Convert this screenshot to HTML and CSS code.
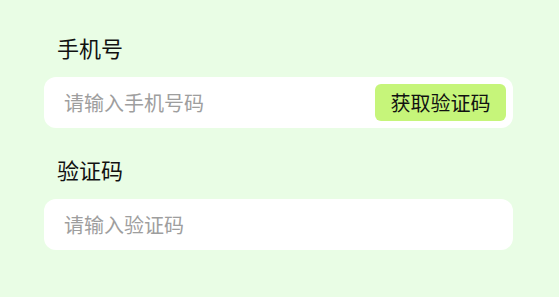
FILE: index.html
```html
<!DOCTYPE html>
<html lang="zh-CN">
<head>
<meta charset="utf-8">
<link rel="stylesheet" href="styles.css">
</head>
<body>
<div class="form">
  <div class="field">
    <div class="label">手机号</div>
    <div class="input-box">
      <input class="input" type="text" placeholder="请输入手机号码">
      <button class="code-btn" type="button">获取验证码</button>
    </div>
  </div>
  <div class="field">
    <div class="label">验证码</div>
    <div class="input-box">
      <input class="input" type="text" placeholder="请输入验证码">
    </div>
  </div>
</div>
</body>
</html>
```
FILE: styles.css
```css
html, body {
  margin: 0;
  padding: 0;
  background: #e9fde5;
  font-family: "Noto Sans CJK SC", "Noto Sans", sans-serif;
}
.form {
  padding: 32px 46px 0 44px;
  display: flex;
  flex-direction: column;
  gap: 26px;
}
.field {
  display: flex;
  flex-direction: column;
}
.label {
  height: 30px;
  line-height: 30px;
  font-size: 22px;
  color: #111;
  padding-left: 13px;
  margin-bottom: 15px;
}
.input-box {
  height: 51px;
  background: #fff;
  border-radius: 12px;
  display: flex;
  align-items: center;
  padding: 0 7px 0 20px;
  box-sizing: border-box;
}
.input {
  flex: 1;
  min-width: 0;
  border: none;
  outline: none;
  background: transparent;
  font-family: inherit;
  font-size: 20px;
  color: #333;
  padding: 0;
}
.input::placeholder {
  color: #9e9e9e;
}
.code-btn {
  width: 131px;
  height: 37px;
  border: none;
  border-radius: 6px;
  background: #c6f57a;
  font-family: inherit;
  font-size: 20px;
  color: #111;
  padding: 0;
}
```
